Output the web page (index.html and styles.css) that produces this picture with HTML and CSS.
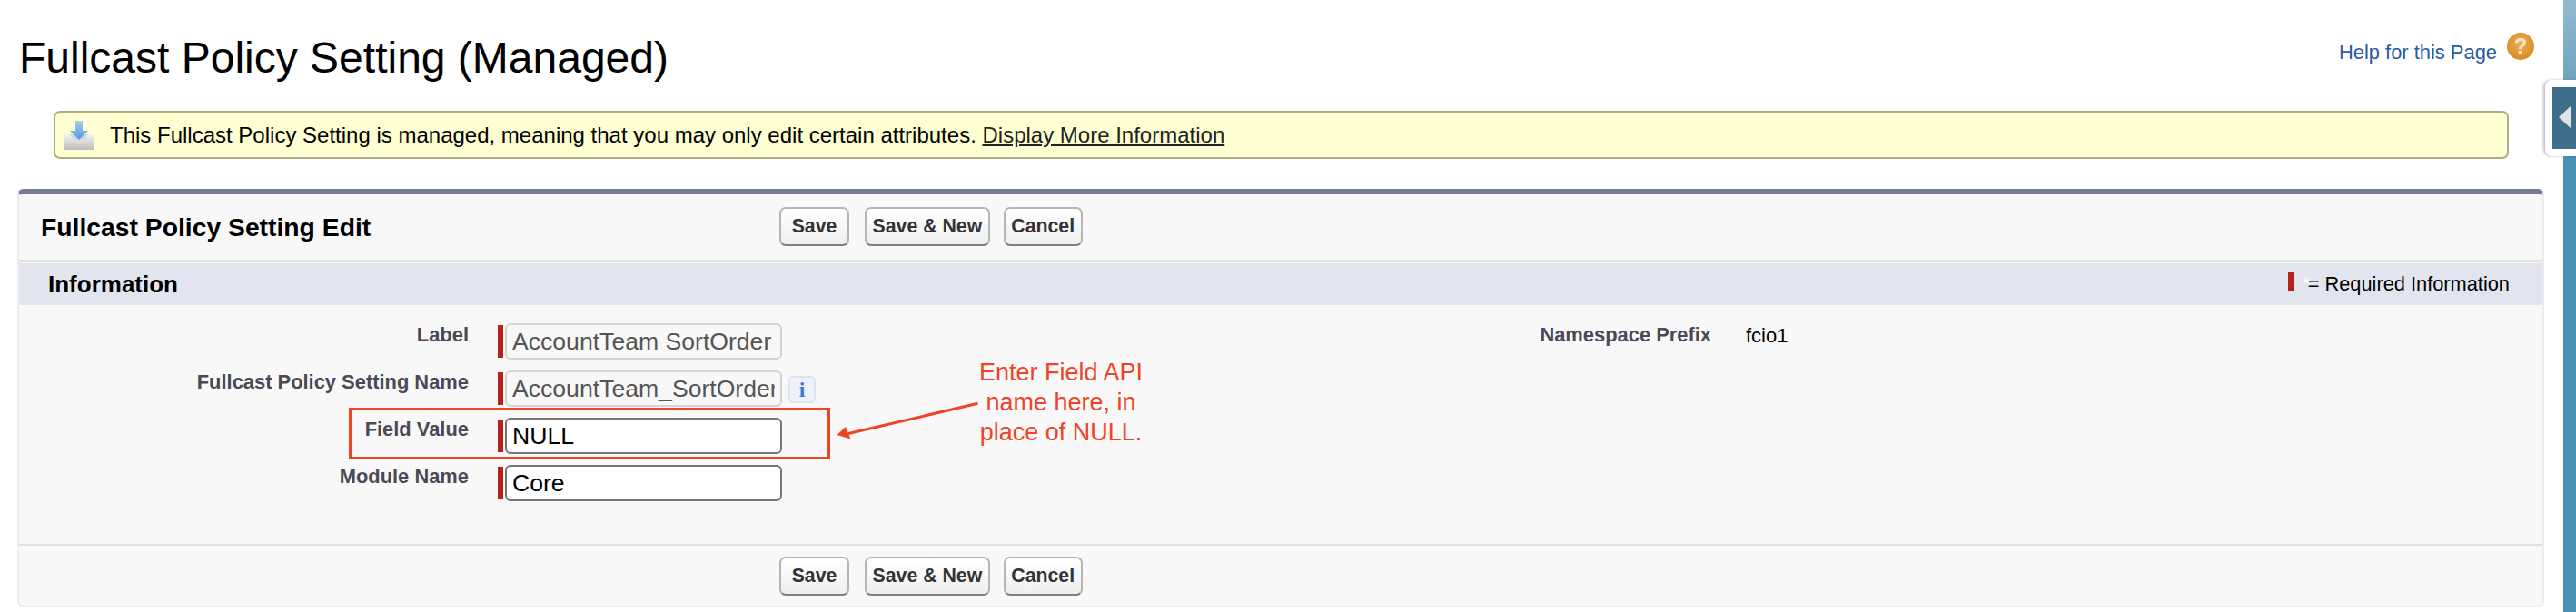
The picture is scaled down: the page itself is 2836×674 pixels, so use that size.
FILE: index.html
```html
<!DOCTYPE html>
<html lang="en">
<head>
    <meta charset="UTF-8">
    <title>Fullcast Policy Setting (Managed)</title>
    <link rel="stylesheet" href="styles.css">
</head>
<body>

    <div class="page">
        <!-- Page title -->
        <div class="title-row">
            <h1>Fullcast Policy Setting (Managed)</h1>
            <a href="#" class="help-link">
                <span>Help for this Page</span>
                <span class="help-icon">?</span>
            </a>
        </div>

        <!-- Managed message -->
        <div class="banner">
            <svg class="banner-icon" width="32" height="32" viewBox="0 0 32 32">
                <defs>
                    <linearGradient id="tray" x1="0" y1="0" x2="0" y2="1">
                        <stop offset="0" stop-color="#f4f4f0"/>
                        <stop offset="1" stop-color="#bdbdbd"/>
                    </linearGradient>
                    <linearGradient id="arrow" x1="0" y1="0" x2="0" y2="1">
                        <stop offset="0" stop-color="#a5d0ee"/>
                        <stop offset="1" stop-color="#4a9ae0"/>
                    </linearGradient>
                </defs>
                <path d="M0 15h32v17H0z" fill="url(#tray)"/>
                <path d="M6 15h20l-3 6H9z" fill="#d8d8d4"/>
                <path d="M12 0h8v11h6l-10 10L6 11h6z" fill="url(#arrow)"/>
            </svg>
            <p>This Fullcast Policy Setting is managed, meaning that you may only edit certain attributes. <a href="#">Display More Information</a></p>
        </div>

        <!-- Edit panel -->
        <div class="panel">
            <div class="panel-head">
                <h2>Fullcast Policy Setting Edit</h2>
                <div class="buttons">
                    <button type="button" class="btn-save">Save</button>
                    <button type="button">Save &amp; New</button>
                    <button type="button">Cancel</button>
                </div>
            </div>

            <div class="section-head">
                <h3>Information</h3>
                <div class="legend"><span class="req"></span><span class="star">*</span>= Required Information</div>
            </div>

            <div class="form">
                <div class="form-left">
                    <div class="row">
                        <label>Label</label>
                        <span class="req"></span>
                        <input type="text" class="locked" value="AccountTeam SortOrder" disabled>
                    </div>
                    <div class="row">
                        <label>Fullcast Policy Setting Name</label>
                        <span class="req"></span>
                        <input type="text" class="locked" value="AccountTeam_SortOrder" disabled>
                        <span class="info-btn">i</span>
                    </div>
                    <div class="row">
                        <label>Field Value</label>
                        <span class="req"></span>
                        <input type="text" value="NULL">
                    </div>
                    <div class="row">
                        <label>Module Name</label>
                        <span class="req"></span>
                        <input type="text" value="Core">
                    </div>
                </div>
                <div class="form-right">
                    <label>Namespace Prefix</label>
                    <span class="value">fcio1</span>
                </div>

                <!-- Screenshot annotation -->
                <div class="mark-box"></div>
                <svg class="mark-arrow" width="160" height="44" viewBox="0 0 160 44">
                    <path d="M155.500 2.300L13 35.500" stroke="#ee4326" stroke-width="3" fill="none"/>
                    <path d="M0.500 37L10 28l5.500 13.500z" fill="#ee4326"/>
                </svg>
                <div class="mark-text">Enter Field API<br>name here, in<br>place of NULL.</div>
            </div>

            <div class="panel-foot">
                <div class="buttons">
                    <button type="button" class="btn-save">Save</button>
                    <button type="button">Save &amp; New</button>
                    <button type="button">Cancel</button>
                </div>
            </div>
        </div>
    </div>

    <!-- Collapsed sidebar -->
    <div class="side">
        <div class="side-handle"><span class="side-arrow"></span></div>
    </div>

</body>
</html>
```

FILE: styles.css
```css
html, body {
    height: 100%;
}

body {
    font-family: "Liberation Sans", Arial, sans-serif;
    background-color: #fff;
    color: #000;
    display: flex;
    margin: 0;
    height: 674px;
    overflow: hidden;
}

.page {
    flex: 1;
    min-width: 0;
    padding: 0 21px 0 19px;
}

/* Title */
.title-row {
    display: flex;
    justify-content: space-between;
    height: 122px;
}

h1 {
    margin: 36px 0 0 2px;
    font-size: 48px;
    font-weight: normal;
    line-height: 56px;
}

.help-link {
    display: flex;
    align-items: flex-start;
    margin: 36px 11px 0 0;
    color: #2a5ba5;
    font-size: 21.9px;
    line-height: 43px;
    text-decoration: none;
}

.help-icon {
    width: 30px;
    height: 30px;
    margin-left: 11px;
    border-radius: 50%;
    background: radial-gradient(circle at 50% 40%, #f0ad55, #d98a25 75%, #b87420);
    color: #fbe6c8;
    font-size: 24px;
    font-weight: bold;
    line-height: 30px;
    text-align: center;
}

/* Message */
.banner {
    display: flex;
    align-items: center;
    height: 53px;
    box-sizing: border-box;
    margin: 0 39px 0 40px;
    padding-left: 10px;
    border: 2px solid #adad85;
    border-radius: 7px;
    background-color: #ffffd1;
}

.banner-icon {
    flex: none;
    margin-right: 18px;
}

.banner p {
    margin: 0;
    font-size: 24px;
}

.banner a {
    color: #222;
}

/* Panel */
.panel {
    position: relative;
    height: 461px;
    box-sizing: border-box;
    margin-top: 33px;
    border: 2px solid #ececec;
    border-top: 6px solid #747c93;
    border-radius: 7px;
    background-color: #f8f8f8;
    display: flex;
    flex-direction: column;
}

.panel-head {
    display: flex;
    flex: none;
    height: 74px;
    border-bottom: 2px solid #e0e0e0;
    margin-bottom: 2px;
    padding-top: 14px;
    box-sizing: border-box;
}

.panel-head h2 {
    width: 837px;
    margin: 0;
    padding: 4px 0 0 24px;
    box-sizing: border-box;
    font-size: 28.3px;
    line-height: 36px;
}

.buttons {
    display: flex;
    gap: 17px;
}

.buttons button:last-child {
    margin-left: -2px;
}

button {
    height: 43px;
    padding: 0 6.500px;
    border: 2px solid #b5b5b5;
    border-bottom-color: #7f7f7f;
    border-radius: 7px;
    background: linear-gradient(#fff, #efefef);
    color: #333;
    font-family: "Liberation Sans", Arial, sans-serif;
    font-size: 21.3px;
    font-weight: bold;
}

.btn-save {
    width: 77px;
}

.section-head {
    display: flex;
    flex: none;
    justify-content: space-between;
    align-items: center;
    height: 46px;
    padding: 0 36px 0 32px;
    background-color: #e2e5ee;
}

.section-head h3 {
    margin: 0;
    font-size: 26px;
}

.legend {
    display: flex;
    align-items: center;
    font-size: 21.8px;
}

.legend .req {
    height: 20px;
    margin: 0 10px 6px 0;
}

.star {
    width: 6px;
    color: #fff;
}

.req {
    flex: none;
    width: 6px;
    background-color: #b3231a;
}

/* Form */
.form {
    position: relative;
    flex: 1;
    display: flex;
    padding-top: 20px;
}

.form-left {
    display: flex;
    flex-direction: column;
    gap: 12px;
    width: 1400px;
}

.row {
    display: flex;
    height: 40px;
}

.row label {
    width: 495px;
    margin-right: 32px;
    text-align: right;
}

label {
    color: #4a4a56;
    font-size: 21.9px;
    font-weight: bold;
    line-height: 26px;
    flex: none;
}

.row .req {
    height: 36px;
    margin: 2px 2px 0 0;
}

input {
    width: 305px;
    height: 40px;
    box-sizing: border-box;
    padding: 0 6px;
    border: 2px solid #767676;
    border-radius: 6px;
    background-color: #fff;
    color: #000;
    font-family: "Liberation Sans", Arial, sans-serif;
    font-size: 26.6px;
}

input.locked {
    border-color: #d4d4d4;
    background-color: #f8f8f8;
    color: #555;
}

.info-btn {
    width: 30px;
    height: 30px;
    box-sizing: border-box;
    margin: 6px 0 0 7px;
    border: 2px solid #dfe3ea;
    border-radius: 5px;
    background-color: #eef3fb;
    color: #3d78d6;
    font-family: "Liberation Serif", serif;
    font-size: 24px;
    font-weight: bold;
    line-height: 26px;
    text-align: center;
}

.form-right {
    display: flex;
    height: 30px;
    margin-left: 63px;
}

.form-right label {
    width: 400px;
    text-align: right;
}

.value {
    margin-left: 38px;
    font-size: 22px;
    line-height: 28px;
}

/* Annotation over the form */
.mark-box {
    position: absolute;
    left: 362.500px;
    top: 112.500px;
    width: 530px;
    height: 57.500px;
    box-sizing: border-box;
    border: 3px solid #ee4326;
}

.mark-arrow {
    position: absolute;
    left: 899.500px;
    top: 106px;
}

.mark-text {
    position: absolute;
    left: 1047px;
    top: 58px;
    width: 200px;
    color: #ee4326;
    font-size: 27px;
    line-height: 33px;
    text-align: center;
}

.panel-foot {
    flex: none;
    border-top: 2px solid #e0e0e0;
    height: 68px;
    box-sizing: border-box;
    padding: 12px 0 0 837px;
}

/* Sidebar */
.side {
    position: relative;
    flex: none;
    width: 14px;
    background: linear-gradient(#93bacf, #4a8fb6 170px, #4a8fb6);
}

.side-handle {
    position: absolute;
    right: 0;
    top: 88px;
    width: 26px;
    height: 68px;
    border: 8px solid #fff;
    border-right: none;
    border-radius: 8px 0 0 8px;
    box-shadow: -2px 0 3px rgba(60, 70, 90, 0.35);
    background-color: #3f6e8b;
}

.side-arrow {
    display: block;
    width: 0;
    height: 0;
    margin: 20px 0 0 7px;
    border-top: 13px solid transparent;
    border-bottom: 13px solid transparent;
    border-right: 14px solid #dfe3e4;
}
```
